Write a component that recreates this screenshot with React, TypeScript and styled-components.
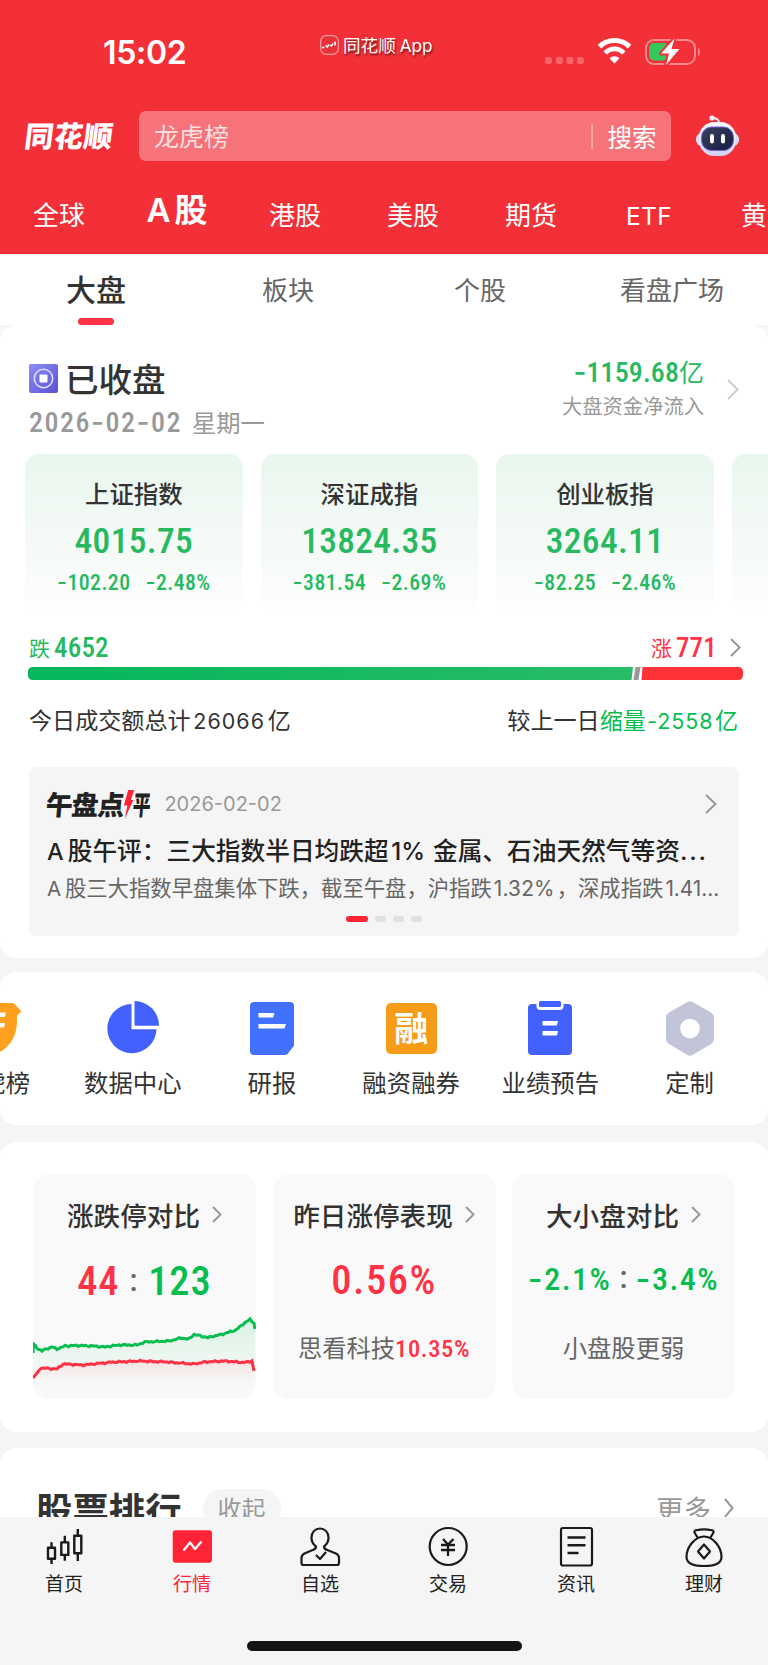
import React from "react";
import styled, { createGlobalStyle, css } from "styled-components";

const GlobalStyle = createGlobalStyle`
  * { box-sizing: border-box; }
  body {
    margin: 0;
    background: #f5f5f5;
    color: #333;
    font-family: "Noto Sans CJK SC", sans-serif;
  }
`;

const RED = "#ff3246";
const GREEN = "#27b960";
const VIVID_GREEN = "#06bd50";

/* ---------- shared pieces ---------- */

const Figure = styled.span<{ $size: number; $ls?: number; $weight?: number; $color?: string }>`
  font-family: Roboto, "Noto Sans CJK SC", sans-serif;
  font-stretch: 75%;
  font-size: ${(p) => p.$size}px;
  font-weight: ${(p) => p.$weight ?? 500};
  letter-spacing: ${(p) => p.$ls ?? 0}px;
  color: ${(p) => p.$color ?? "inherit"};
  white-space: nowrap;
`;

const Dash = styled.span`
  font-family: Inter, sans-serif;
`;

const Latin = styled.span<{ $size?: number; $ls?: number; $gap?: number }>`
  font-family: Inter, "Noto Sans CJK SC", sans-serif;
  ${(p) => p.$size && css`font-size: ${p.$size}px;`}
  letter-spacing: ${(p) => p.$ls ?? 0}px;
  margin: 0 ${(p) => p.$gap ?? 0}px;
`;

interface NumProps {
  text: string;
  size: number;
  ls?: number;
  weight?: number;
  color?: string;
}

const Num = ({ text, size, ls, weight, color }: NumProps) => (
  <Figure $size={size} $ls={ls} $weight={weight} $color={color}>
    {text.split(/(-)/).filter(Boolean).map((t, i) => (t === "-" ? <Dash key={i}>-</Dash> : t))}
  </Figure>
);

const ChevronSvg = styled.svg`
  display: block;
  flex: none;
  fill: none;
  stroke-width: 2;
`;

const Chevron = ({ w, h, color = "#999" }: { w: number; h: number; color?: string }) => (
  <ChevronSvg width={w} height={h} stroke={color}>
    <path d={`M1 1L${w - 1.5} ${h / 2}L1 ${h - 1}`} />
  </ChevronSvg>
);

const Screen = styled.div`
  width: 768px;
  height: 1665px;
  overflow: hidden;
  display: flex;
  flex-direction: column;
  background: #f5f5f5;
`;

/* ---------- header ---------- */

const Header = styled.header`
  height: 253.5px;
  flex: none;
  background: #f33038;
  color: #fff;
  overflow: hidden;
`;

const StatusBar = styled.div`
  height: 111px;
  display: grid;
  grid-template-columns: 320px 1fr 223px;
  align-items: start;
`;

const Clock = styled.div`
  padding: 33px 0 0 103px;
  font: 600 32px/40px Inter, sans-serif;
  letter-spacing: -0.3px;
`;

const AppLabel = styled.div`
  display: flex;
  align-items: center;
  gap: 4px;
  padding-top: 32px;
  font-size: 17.6px;
  line-height: 25px;
  text-shadow: 1px 2px 2px rgba(0, 0, 0, 0.55);
`;

const StatusIcons = styled.div`
  padding-top: 36px;
  display: flex;
`;

const SearchRow = styled.div`
  height: 50px;
  display: flex;
  align-items: center;
  padding-left: 25px;
`;

const Brand = styled.div`
  width: 114px;
  font-size: 29px;
  font-weight: 900;
  line-height: 50px;
  margin-top: -4px;
  transform: skewX(-7deg);
  letter-spacing: 0.6px;
`;

const SearchBox = styled.div`
  width: 532px;
  height: 50px;
  border-radius: 7px;
  background: #f67479;
  display: flex;
  align-items: center;
  padding: 0 14.5px 0 15px;
  font-size: 25px;
  line-height: 50px;
`;

const Placeholder = styled.span`
  flex: 1;
  color: #fddfe0;
  padding-bottom: 3px;
`;

const SearchButton = styled.span`
  border-left: 2px solid #f9a3a6;
  padding-left: 15px;
  line-height: 25px;
  font-size: 24.5px;
`;

const RobotSvg = styled.svg`
  margin-left: 24px;
`;

const MarketTabs = styled.nav`
  display: flex;
  height: 92px;
  padding-top: 16px;
`;

const MarketTab = styled.div<{ $active?: boolean }>`
  width: 118px;
  flex: none;
  text-align: center;
  font-size: ${(p) => (p.$active ? 33 : 26)}px;
  font-weight: ${(p) => (p.$active ? 600 : 400)};
  line-height: ${(p) => (p.$active ? 62 : 74)}px;
  white-space: nowrap;
`;

/* ---------- sub tabs ---------- */

const SubTabs = styled.nav`
  height: 71.5px;
  flex: none;
  display: grid;
  grid-template-columns: repeat(4, 1fr);
  background: #fff;
`;

const SubTab = styled.div<{ $active?: boolean }>`
  display: flex;
  flex-direction: column;
  align-items: center;
  font-size: ${(p) => (p.$active ? 30 : 26)}px;
  font-weight: ${(p) => (p.$active ? 500 : 400)};
  color: ${(p) => (p.$active ? "#333" : "#666")};
  line-height: ${(p) => (p.$active ? 39 : 40)}px;
  padding-top: 15.5px;
`;

const Indicator = styled.i`
  width: 36px;
  height: 7px;
  border-radius: 3.5px;
  margin-top: 10px;
  background: ${RED};
`;

/* ---------- market overview ---------- */

const Panel = styled.section<{ $h: number; $mt?: number; $cut?: boolean }>`
  height: ${(p) => p.$h}px;
  margin-top: ${(p) => p.$mt ?? 0}px;
  flex: none;
  background: #fff;
  border-radius: ${(p) => (p.$cut ? "16px 16px 0 0" : "16px")};
  overflow: hidden;
`;

const Summary = styled.div`
  height: 129px;
  display: flex;
  justify-content: space-between;
  padding: 30px 29px 0;
`;

const SessionTitle = styled.div`
  display: flex;
  align-items: center;
  gap: 7px;
  font-size: 33.5px;
  font-weight: 500;
  line-height: 46px;
`;

const SessionDate = styled.div`
  display: flex;
  align-items: center;
  gap: 10px;
  height: 40px;
  line-height: 40px;
  font-size: 24.3px;
  color: #999;
  margin-top: 1px;
`;

const FlowBlock = styled.div`
  display: flex;
  align-items: center;
  gap: 23px;
  height: 58px;
  padding-top: 10px;
`;

const FlowText = styled.div`
  display: flex;
  flex-direction: column;
  align-items: flex-end;
  margin-top: -7px;
`;

const FlowValue = styled.div`
  color: ${GREEN};
  font-size: 25px;
  line-height: 36px;
`;

const FlowLabel = styled.div`
  color: #999;
  font-size: 20.3px;
  line-height: 28px;
`;

const IndexRow = styled.div`
  display: flex;
  gap: 18px;
  padding-left: 25px;
  height: 158px;
`;

const IndexCard = styled.div`
  width: 217.6px;
  height: 158px;
  flex: none;
  border-radius: 14px;
  background: linear-gradient(#e8f7ee, #f3f9f5 45%, #fdfefd);
  display: flex;
  flex-direction: column;
  align-items: center;
  color: ${GREEN};
`;

const IndexName = styled.div`
  color: #333;
  font-size: 24.4px;
  font-weight: 500;
  line-height: 36px;
  margin-top: 20.5px;
`;

const IndexValue = styled.div`
  line-height: 44px;
  margin-top: 8.5px;
`;

const IndexChange = styled.div`
  display: flex;
  gap: 15px;
  line-height: 26px;
  margin-top: 1px;
`;

const BreadthRow = styled.div`
  display: flex;
  justify-content: space-between;
  align-items: center;
  height: 30px;
  margin: 21px 27px 0 29px;
  font-size: 21px;
  line-height: 30px;
`;

const BreadthSide = styled.div<{ $color: string }>`
  color: ${(p) => p.$color};
  display: flex;
  align-items: center;
  gap: 4px;
`;

const BreadthLabel = styled.span`
  margin-top: -3px;
`;

const BreadthArrow = styled.span`
  margin-left: 9px;
  margin-top: -2px;
`;

const BreadthBar = styled.svg`
  display: block;
  margin: 4px 0 0 28px;
`;

const TurnoverRow = styled.div`
  display: flex;
  justify-content: space-between;
  margin: 21.5px 30px 0 29px;
  font-size: 23.1px;
  line-height: 34px;
`;

const Accent = styled.span`
  color: ${VIVID_GREEN};
`;

const NewsCard = styled.div`
  margin: 29px 29px 0;
  height: 169px;
  border-radius: 7px;
  background: #f5f5f5;
  padding: 19px 22px 0 18px;
`;

const NewsHead = styled.div`
  display: flex;
  align-items: center;
  height: 36px;
`;

const NewsBrand = styled.div`
  display: flex;
  align-items: center;
  margin-left: -1px;
  font-size: 27px;
  font-weight: 900;
  line-height: 36px;
  color: #222;
  transform: skewX(-5deg);
  letter-spacing: -1.2px;
`;

const BoltSvg = styled.svg`
  margin: 0 0 0 1px;
`;

const NarrowGlyph = styled.span`
  width: 17px;
  margin-right: -1px;
  transform: scaleX(0.66);
  transform-origin: left;
`;

const NewsDate = styled.div`
  flex: 1;
  color: #999;
  margin-left: 15px;
`;

const NewsTitle = styled.div`
  font-size: 24.7px;
  font-weight: 500;
  color: #222;
  line-height: 36px;
  margin-top: 9px;
  white-space: nowrap;
`;

const NewsBody = styled.div`
  font-size: 21.35px;
  color: #666;
  line-height: 32px;
  margin-top: 1.5px;
  white-space: nowrap;
`;

const Dots = styled.div`
  display: flex;
  justify-content: center;
  gap: 7px;
  margin: 10.5px -2px 0 2px;
`;

const Dot = styled.i<{ $active?: boolean }>`
  width: ${(p) => (p.$active ? 22 : 11)}px;
  height: 6px;
  border-radius: 3px;
  background: ${(p) => (p.$active ? "#ff2436" : "#e0e0e0")};
`;

/* ---------- shortcuts ---------- */

const Shortcuts = styled.div`
  display: flex;
  margin-left: -76px;
  padding-top: 25px;
`;

const Shortcut = styled.div`
  width: 139.2px;
  flex: none;
  display: flex;
  flex-direction: column;
  align-items: center;
  font-size: 24.4px;
  line-height: 36px;
  white-space: nowrap;
`;

const ShortcutIcon = styled.svg`
  margin-bottom: 7px;
`;

const MarginTile = styled.div`
  width: 51px;
  height: 51px;
  margin: 6px 0 10px;
  border-radius: 5px;
  background: #f79c17;
  color: #fff;
  text-align: center;
  font-size: 34px;
  font-weight: 700;
  line-height: 48px;
`;

/* ---------- comparison cards ---------- */

const CompareRow = styled.div`
  display: flex;
  gap: 16.5px;
  padding: 32px 33px 0;
`;

const CompareCard = styled.div`
  flex: 1;
  height: 225px;
  border-radius: 17px;
  background: #f9f9f9;
  overflow: hidden;
  text-align: center;
`;

const CompareTitle = styled.div`
  display: flex;
  align-items: center;
  justify-content: center;
  gap: 12px;
  margin-top: 21.5px;
  font-size: 26.6px;
  font-weight: 500;
  line-height: 38px;
`;

const CompareValue = styled.div<{ $drop?: number }>`
  display: flex;
  align-items: center;
  justify-content: center;
  height: 50px;
  padding-top: ${(p) => p.$drop ?? 0}px;
  margin-top: 19.5px;
`;

const Colon = styled.span<{ $m: number }>`
  font: 500 31px/40px Roboto, sans-serif;
  color: #666;
  margin: 0 ${(p) => p.$m}px;
`;

const CompareNote = styled.div`
  margin-top: 26px;
  font-size: 24.3px;
  line-height: 36px;
  color: #666;
`;

const Trend = styled.svg`
  display: block;
  margin-top: -2px;
`;

/* ---------- ranking + bottom bar ---------- */

const RankHead = styled.div`
  display: flex;
  align-items: center;
  padding: 40px 34px 0 36px;
  height: 82px;
`;

const RankTitle = styled.div`
  font-size: 36.4px;
  font-weight: 700;
  line-height: 42px;
  margin-top: -3px;
`;

const FoldPill = styled.div`
  width: 78px;
  height: 41px;
  margin-left: 21px;
  border-radius: 20px;
  background: #f5f5f5;
  color: #999;
  font-size: 24px;
  line-height: 38px;
  text-align: center;
`;

const More = styled.div`
  flex: 1;
  display: flex;
  align-items: center;
  justify-content: flex-end;
  gap: 13px;
  color: #999;
  font-size: 27.5px;
  line-height: 40px;
  margin-top: -2px;
`;

const BottomBar = styled.footer`
  height: 148px;
  flex: none;
  background: #f5f5f5;
  display: flex;
  flex-direction: column;
`;

const NavRow = styled.nav`
  display: grid;
  grid-template-columns: repeat(6, 1fr);
  height: 124px;
`;

const NavItem = styled.div<{ $active?: boolean }>`
  display: flex;
  flex-direction: column;
  align-items: center;
  padding-top: 8px;
  font-size: 19px;
  line-height: 28px;
  color: ${(p) => (p.$active ? "#ff2436" : "#222")};
`;

const NavIcon = styled.svg`
  fill: none;
  stroke: #1a1a1a;
  stroke-width: 2.2;
  stroke-linejoin: round;
`;

const HomeIndicator = styled.i`
  width: 275px;
  height: 10px;
  border-radius: 5px;
  background: #141414;
  align-self: center;
`;

/* ---------- data ---------- */

const indices = [
  { name: "上证指数", value: "4015.75", diff: "-102.20", pct: "-2.48%" },
  { name: "深证成指", value: "13824.35", diff: "-381.54", pct: "-2.69%" },
  { name: "创业板指", value: "3264.11", diff: "-82.25", pct: "-2.46%" },
];

/* Anchor points of the two trend lines; small jitter is added between them. */
const upLine: [number, number][] = [[0, 52], [0.5, 43], [4, 47], [9, 50], [13, 48], [19, 46], [24, 48], [32, 45], [45, 44.5], [60, 45], [72, 46], [86, 44], [104, 44], [112, 41], [136, 40], [148, 37], [156, 38], [161, 33.5], [175, 36.5], [190, 33], [203, 29], [210, 23], [217, 18.5], [221, 22], [222, 28]];
const downLine: [number, number][] = [[0, 77], [8, 67], [24, 68], [30, 63], [50, 64], [70, 62], [82, 61], [107, 60], [134, 61], [160, 63], [172, 61], [190, 60], [211, 61.5], [219, 60], [221, 70]];

const jitter = (pts: [number, number][]) => {
  const out: string[] = [];
  let n = 0;
  for (let i = 0; i < pts.length - 1; i++) {
    const [x0, y0] = pts[i];
    const [x1, y1] = pts[i + 1];
    const steps = Math.max(1, Math.round((x1 - x0) / 2));
    for (let s = 0; s < steps; s++) {
      const t = s / steps;
      const d = i === 0 ? 0 : Math.sin(n * 2.3) * 0.5 + Math.sin(n * 5.1) * 0.4;
      out.push(`${(x0 + (x1 - x0) * t).toFixed(1)} ${(y0 + (y1 - y0) * t + d).toFixed(1)}`);
      n++;
    }
  }
  out.push(pts[pts.length - 1].join(" "));
  return out.join("L");
};

const TrendChart = () => {
  const up = jitter(upLine);
  const down = jitter(downLine);
  return (
    <Trend width="223" height="90" viewBox="0 0 223 90" fill="none">
      <defs>
        <linearGradient id="upFill" x1="0" y1="0" x2="0" y2="1">
          <stop offset="0" stopColor="#06bd50" stopOpacity="0.13" />
          <stop offset="0.7" stopColor="#06bd50" stopOpacity="0.02" />
          <stop offset="1" stopColor="#06bd50" stopOpacity="0" />
        </linearGradient>
        <linearGradient id="downFill" x1="0" y1="0" x2="0" y2="1">
          <stop offset="0" stopColor={RED} stopOpacity="0.1" />
          <stop offset="0.8" stopColor={RED} stopOpacity="0" />
        </linearGradient>
      </defs>
      <path d={`M${up}L222 90L0 90Z`} fill="url(#upFill)" />
      <path d={`M${down}L222 88L0 88Z`} fill="url(#downFill)" />
      <path d={`M${up}`} stroke={VIVID_GREEN} strokeWidth="3" />
      <path d={`M${down}`} stroke={RED} strokeWidth="3" />
    </Trend>
  );
};

const Robot = () => (
  <RobotSvg width="45" height="42" viewBox="0 0 45 42">
    <defs>
      <linearGradient id="shell" x1="0" y1="0" x2="0" y2="1">
        <stop offset="0" stopColor="#fff" />
        <stop offset="1" stopColor="#cfd1f0" />
      </linearGradient>
      <linearGradient id="visor" x1="0" y1="0" x2="1" y2="1">
        <stop offset="0" stopColor="#39415f" />
        <stop offset="1" stopColor="#161d3f" />
      </linearGradient>
    </defs>
    <path d="M24 8C24 4 21 3 17 3" fill="none" stroke="#ecebfa" strokeWidth="1.8" />
    <circle cx="17" cy="3" r="2.6" fill="#eeeafa" />
    <rect x="1" y="18" width="43" height="13" rx="6" fill="#dcdcf6" />
    <rect x="4" y="7" width="37" height="34" rx="15.5" fill="url(#shell)" />
    <rect x="6.5" y="12" width="32" height="23.5" rx="10" fill="url(#visor)" stroke="#7f5fe8" strokeWidth="1" />
    <rect x="15" y="19" width="4" height="9.5" rx="2" fill="#fff" />
    <rect x="26" y="19" width="4" height="9.5" rx="2" fill="#fff" />
  </RobotSvg>
);

const SignalWifiBattery = () => (
  <svg width="160" height="32" viewBox="0 0 160 32">
    {[0, 11, 21.5, 32].map((x) => (
      <rect key={x} x={x} y="21" width="6.8" height="7" rx="2" fill="#f7656b" />
    ))}
    <g fill="none" stroke="#fff" strokeWidth="5">
      <path d="M54.4 10.6A21.5 21.5 0 0 1 84.6 10.6" />
      <path d="M60.2 17A12.6 12.6 0 0 1 78.8 17" strokeWidth="4.6" />
    </g>
    <path d="M64.5 22.3A7.3 7.3 0 0 1 74.5 22.3L69.5 27.5Z" fill="#fff" />
    <rect x="101" y="4" width="49" height="24" rx="8" fill="none" stroke="#f9898e" strokeWidth="2" />
    <path d="M153 12c2.6.6 2.6 7.4 0 8z" fill="#f9898e" />
    <rect x="104" y="7" width="19" height="17.5" rx="5" fill="#34c759" />
    <path d="M129.5 2.5L116 17.5H124L121 29L134.5 13H126.5Z" fill="#fff" stroke="#f33038" strokeWidth="4" paintOrder="stroke" strokeLinejoin="round" />
  </svg>
);

export default function App() {
  return (
    <>
      <GlobalStyle />
      <Screen>
        <Header>
          <StatusBar>
            <Clock>15:02</Clock>
            <AppLabel>
              <svg width="19" height="20" viewBox="0 0 19 20">
                <rect x="0.7" y="0.7" width="17.6" height="18.6" rx="5.5" fill="#e8323a" stroke="#f8a0a3" strokeWidth="1.2" />
                <path d="M2 12.5h2.5M5.5 10.5l1.8 1.5 1.5-2.5M10 10l1.5 1 1.5-2.5M15 6.5v4" fill="none" stroke="#fff" strokeWidth="1.5" />
              </svg>
              <span>同花顺 <Latin $size={17.2}>App</Latin></span>
            </AppLabel>
            <StatusIcons>
              <SignalWifiBattery />
            </StatusIcons>
          </StatusBar>
          <SearchRow>
            <Brand>同花顺</Brand>
            <SearchBox>
              <Placeholder>龙虎榜</Placeholder>
              <SearchButton>搜索</SearchButton>
            </SearchBox>
            <Robot />
          </SearchRow>
          <MarketTabs>
            <MarketTab>全球</MarketTab>
            <MarketTab $active><Latin $ls={4}>A</Latin>股</MarketTab>
            <MarketTab>港股</MarketTab>
            <MarketTab>美股</MarketTab>
            <MarketTab>期货</MarketTab>
            <MarketTab><Latin $size={24.5} $ls={0.3}>ETF</Latin></MarketTab>
            <MarketTab>黄金</MarketTab>
          </MarketTabs>
        </Header>

        <SubTabs>
          <SubTab $active>大盘<Indicator /></SubTab>
          <SubTab>板块</SubTab>
          <SubTab>个股</SubTab>
          <SubTab>看盘广场</SubTab>
        </SubTabs>

        <Panel $h={632.5}>
          <Summary>
            <div>
              <SessionTitle>
                <svg width="29" height="29" viewBox="0 0 29 29">
                  <defs>
                    <linearGradient id="badge" x1="0" y1="0" x2="1" y2="1">
                      <stop offset="0" stopColor="#8f8df8" />
                      <stop offset="1" stopColor="#5850d4" />
                    </linearGradient>
                  </defs>
                  <rect width="29" height="29" rx="2" fill="url(#badge)" />
                  <circle cx="14.5" cy="14.5" r="9.2" fill="none" stroke="#e0defc" strokeWidth="1.6" />
                  <rect x="10.5" y="10.5" width="8" height="8" rx="1" fill="#fff" />
                </svg>
                已收盘
              </SessionTitle>
              <SessionDate>
                <Num text="2026-02-02" size={28} weight={500} ls={1.5} />
                <span>星期一</span>
              </SessionDate>
            </div>
            <FlowBlock>
              <FlowText>
                <FlowValue><Num text="-1159.68" size={28} ls={0.1} />亿</FlowValue>
                <FlowLabel>大盘资金净流入</FlowLabel>
              </FlowText>
              <Chevron w={12} h={21} color="#ccc" />
            </FlowBlock>
          </Summary>

          <IndexRow>
            {indices.map((d) => (
              <IndexCard key={d.name}>
                <IndexName>{d.name}</IndexName>
                <IndexValue><Num text={d.value} size={35.5} ls={0.3} /></IndexValue>
                <IndexChange>
                  <Num text={d.diff} size={21.8} ls={0.4} />
                  <Num text={d.pct} size={21.8} ls={0.4} />
                </IndexChange>
              </IndexCard>
            ))}
            <IndexCard />
          </IndexRow>

          <BreadthRow>
            <BreadthSide $color={GREEN}><BreadthLabel>跌</BreadthLabel><Num text="4652" size={27} ls={0.2} /></BreadthSide>
            <BreadthSide $color={RED}>
              <BreadthLabel>涨</BreadthLabel><Num text="771" size={27} ls={0.2} />
              <BreadthArrow><Chevron w={11} h={19} /></BreadthArrow>
            </BreadthSide>
          </BreadthRow>
          <BreadthBar width="716" height="13" viewBox="0 0 716 13">
            <defs>
              <linearGradient id="fall" x1="0" x2="1">
                <stop offset="0" stopColor="#04b65c" />
                <stop offset="1" stopColor="#28bc66" />
              </linearGradient>
            </defs>
            <path d="M5 0H605L603.5 13H5Q0 13 0 8V5Q0 0 5 0Z" fill="url(#fall)" />
            <path d="M607.5 0H612.5L610.5 13H605.5Z" fill="#999" />
            <path d="M614.5 0H710Q715 0 715 5V8Q715 13 710 13H613.5Z" fill="#ff3238" />
          </BreadthBar>
          <TurnoverRow>
            <div>今日成交额总计<Latin $size={21.5} $ls={1} $gap={2.7}>26066</Latin>亿</div>
            <div>较上一日<Accent>缩量<Latin $size={21.5} $ls={0.9} $gap={1.4}>-2558</Latin>亿</Accent></div>
          </TurnoverRow>

          <NewsCard>
            <NewsHead>
              <NewsBrand>
                午盘点
                <BoltSvg width="9" height="29" viewBox="0 0 9 29">
                  <path d="M3 0H9L6.5 10H9L2 29L3.5 15.5H0Z" fill="#ff2436" />
                </BoltSvg>
                <NarrowGlyph>平</NarrowGlyph>
              </NewsBrand>
              <NewsDate><Latin $size={20}>2026-02-02</Latin></NewsDate>
              <Chevron w={12} h={20} />
            </NewsHead>
            <NewsTitle><Latin $size={23.5} $ls={-1.5}>A</Latin> 股午评：三大指数半日均跌超<Latin $size={24} $gap={2.5}>1%</Latin> 金属、石油天然气等资<Latin $size={24.7} $ls={1.8}>...</Latin></NewsTitle>
            <NewsBody><Latin $size={20.5} $ls={-1}>A</Latin> 股三大指数早盘集体下跌，截至午盘，沪指跌<Latin $size={20.8} $ls={0.2} $gap={2}>1.32%</Latin>，深成指跌<Latin $size={20.8} $gap={2}>1.41...</Latin></NewsBody>
            <Dots><Dot $active /><Dot /><Dot /><Dot /></Dots>
          </NewsCard>
        </Panel>

        <Panel $h={153} $mt={14.5}>
          <Shortcuts>
            <Shortcut>
              <ShortcutIcon width="60" height="60" viewBox="0 0 60 60">
                <path d="M3 6H48Q50 6 51.5 8L57.5 14.5L53 18.5V24C53 40 45 52 30 58C15 52 7 40 7 24V18L2 14Z" fill="#ffa01e" />
                <path d="M16 15.5H42L41 20H16ZM16 26H41L40 30.5H16Z" fill="#fff" />
              </ShortcutIcon>
              龙虎榜
            </Shortcut>
            <Shortcut>
              <ShortcutIcon width="54" height="60" viewBox="0 0 54 60">
                <path d="M25.5 7A24.6 24.6 0 1 0 50.5 32.2H25.5Z" fill="#4361ff" />
                <path d="M28.5 4A24.5 24.5 0 0 1 53 28.8H29.5Q28.5 28.8 28.5 27.8Z" fill="#4361ff" />
              </ShortcutIcon>
              数据中心
            </Shortcut>
            <Shortcut>
              <ShortcutIcon width="46" height="60" viewBox="0 0 46 60">
                <path d="M5 5H41Q45 5 45 9V48Q45 49 44 50L38.5 57Q37.5 58 36 58H5Q1 58 1 54V9Q1 5 5 5Z" fill="#4271ff" />
                <path d="M9.5 16H25.5L24 20.5H9.5ZM9.5 27H37L35.5 31.5H9.5Z" fill="#fff" />
              </ShortcutIcon>
              研报
            </Shortcut>
            <Shortcut>
              <MarginTile>融</MarginTile>
              融资融券
            </Shortcut>
            <Shortcut>
              <ShortcutIcon width="46" height="60" viewBox="0 0 46 60">
                <rect x="1" y="7" width="44" height="51" rx="4" fill="#4361ff" />
                <path d="M9.5 3.5H36.5V9Q36.5 13 32.5 13H13.5Q9.5 13 9.5 9Z" fill="#fff" />
                <rect x="12" y="4" width="22" height="6" rx="1.5" fill="#4361ff" />
                <path d="M15.5 24H31L30 28.5H15.5ZM15.5 34H31L30 38.5H15.5Z" fill="#fff" />
              </ShortcutIcon>
              业绩预告
            </Shortcut>
            <Shortcut>
              <ShortcutIcon width="50" height="60" viewBox="0 0 50 60">
                <path d="M22.5 5Q25 3.5 27.5 5L46 15.5Q49 17.5 49 20.5V42Q49 45 46 47L27.5 58Q25 59.5 22.5 58L4 47Q1 45 1 42V20.5Q1 17.5 4 15.5Z" fill="#c2c5d8" />
                <circle cx="25" cy="31.5" r="9.8" fill="#fff" />
              </ShortcutIcon>
              定制
            </Shortcut>
          </Shortcuts>
        </Panel>

        <Panel $h={290} $mt={17}>
          <CompareRow>
            <CompareCard>
              <CompareTitle>涨跌停对比<Chevron w={10} h={17} /></CompareTitle>
              <CompareValue $drop={5.5}>
                <Num text="44" size={40.5} ls={0.6} color={RED} />
                <Colon $m={10.5}>:</Colon>
                <Num text="123" size={40.5} ls={0.9} color={VIVID_GREEN} />
              </CompareValue>
              <TrendChart />
            </CompareCard>
            <CompareCard>
              <CompareTitle>昨日涨停表现<Chevron w={10} h={17} /></CompareTitle>
              <CompareValue $drop={3}><Num text="0.56%" size={40.5} ls={1.5} color={RED} /></CompareValue>
              <CompareNote>思看科技<Num text="10.35%" size={24.5} ls={0.6} color={RED} /></CompareNote>
            </CompareCard>
            <CompareCard>
              <CompareTitle>大小盘对比<Chevron w={10} h={17} /></CompareTitle>
              <CompareValue>
                <Num text="-2.1%" size={32} ls={1.5} color={VIVID_GREEN} />
                <Colon $m={8}>:</Colon>
                <Num text="-3.4%" size={32} ls={1.5} color={VIVID_GREEN} />
              </CompareValue>
              <CompareNote>小盘股更弱</CompareNote>
            </CompareCard>
          </CompareRow>
        </Panel>

        <Panel $h={69} $mt={16} $cut>
          <RankHead>
            <RankTitle>股票排行</RankTitle>
            <FoldPill>收起</FoldPill>
            <More>更多<Chevron w={10} h={20} /></More>
          </RankHead>
        </Panel>

        <BottomBar>
          <NavRow>
            <NavItem>
              <NavIcon width="42" height="44" viewBox="0 0 42 44">
                <path d="M5 22.8h7v11h-7zM8.5 17.3v5.5M8.5 33.8V39M18.3 17.4h7v12.5h-7zM21.8 10.7v6.7M21.8 29.9V35.7M31.3 10.8h7v17.4h-7zM34.8 4v6.8M34.8 28.2V36" strokeWidth="2.4" />
              </NavIcon>
              首页
            </NavItem>
            <NavItem $active>
              <NavIcon width="42" height="44" viewBox="0 0 42 44">
                <rect x="1.7" y="5.3" width="39.3" height="32.4" rx="3" fill="#ff2436" stroke="none" />
                <path d="M12.5 25.5L19 17.5L24 24L30.5 16.5" stroke="#fff" />
              </NavIcon>
              行情
            </NavItem>
            <NavItem>
              <NavIcon width="42" height="44" viewBox="0 0 42 44">
                <path d="M17 21.5C13.5 19 12.5 16 12.5 12.5C12.5 7.5 16 3.5 21 3.5S29.5 7.5 29.5 12.5C29.5 16 28.5 19 25 21.5C25 24 26.5 24.5 29.5 25.5L37 28.5Q40 30 40 33V38Q40 40 38 40H4.5Q2.5 40 2.5 38V33Q2.5 30 5.5 28.5L12.5 25.5C15.5 24.5 17 24 17 21.5Z" />
                <path d="M17 30L21 34L27 27" />
              </NavIcon>
              自选
            </NavItem>
            <NavItem>
              <NavIcon width="42" height="44" viewBox="0 0 42 44">
                <circle cx="21.2" cy="21.5" r="18.5" />
                <path d="M16 14L21 19.5L26.5 14M14 20H28M14 25H28M21 19.5V31" strokeWidth="2.3" />
              </NavIcon>
              交易
            </NavItem>
            <NavItem>
              <NavIcon width="42" height="44" viewBox="0 0 42 44">
                <rect x="6" y="3" width="31" height="37.5" rx="2" />
                <path d="M12.5 12.5H30.5M12.5 20.3H30.5M12.5 28H23.5" strokeWidth="2.4" />
              </NavIcon>
              资讯
            </NavItem>
            <NavItem>
              <NavIcon width="42" height="44" viewBox="0 0 42 44">
                <path d="M14.5 12.5L11.5 7.5Q11 5.8 13 5.3C18 4.2 24 4.2 29 5.3Q31 5.8 30.5 7.5L27.5 12.5" />
                <path d="M21 11.5C12 11.5 3.5 22 3.5 32C3.5 38.5 9 41 21 41S38.5 38.5 38.5 32C38.5 22 30 11.5 21 11.5Z" />
                <path d="M21 19.5L27 26.5L21 33.5L15 26.5Z" />
              </NavIcon>
              理财
            </NavItem>
          </NavRow>
          <HomeIndicator />
        </BottomBar>
      </Screen>
    </>
  );
}
